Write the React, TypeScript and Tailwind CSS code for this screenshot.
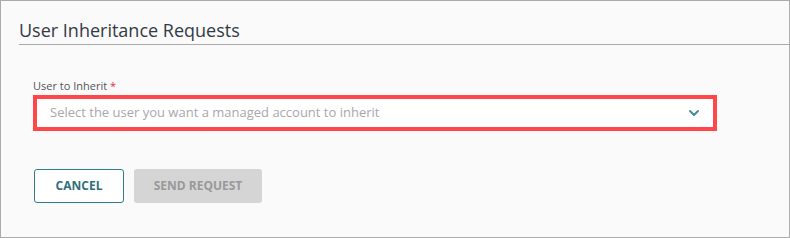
import React from 'react';
import { ChevronDown } from 'lucide-react';

const App: React.FC = () => {
  return (
    <div className="h-[238px] w-[790px] border border-[#ababab] bg-[#fafafa] font-['Open_Sans',sans-serif]">
      {/* Header */}
      <div className="ml-[18px] mt-[17px] border-b border-[#aaaaaa] pb-[2px]">
        <h2 className="text-[18px] leading-[24px] text-[#333a44]">User Inheritance Requests</h2>
      </div>

      {/* Field */}
      <div className="ml-[32px] mt-[33px] w-[684px]">
        <label className="block text-[11px] leading-[15px] text-[#555]">
          User to Inherit <span className="text-[#d9313c]">*</span>
        </label>
        <div className="mt-[2px] flex h-[36px] items-center justify-between border-4 border-[#ff474a] bg-white pl-[13px] pr-[11px]">
          <span className="text-[13px] text-[#a8a8a8]">
            Select the user you want a managed account to inherit
          </span>
          <ChevronDown className="h-[16px] w-[16px] text-[#4a8c97]" strokeWidth={3} />
        </div>
      </div>

      {/* Actions */}
      <div className="ml-[33px] mt-[38px] flex gap-[10px]">
        <button className="h-[34px] w-[90px] rounded-[3px] border border-[#2f7c88] bg-white text-[12px] font-bold text-[#2f6f7c]">
          CANCEL
        </button>
        <button className="h-[34px] w-[128px] rounded-[3px] bg-[#d5d5d5] text-[12px] font-bold text-[#999]">
          SEND REQUEST
        </button>
      </div>
    </div>
  );
};

export default App;
